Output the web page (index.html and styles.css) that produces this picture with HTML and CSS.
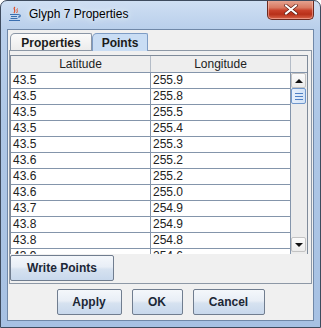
FILE: index.html
```html
<!DOCTYPE html>
<html>
<head>
<meta charset="utf-8">
<link rel="stylesheet" href="styles.css">
</head>
<body>
<div class="window">
  <div class="titlebar">
    <svg class="app-icon" width="14" height="16" viewBox="0 0 14 16">
      <path d="M7 1 C4 3 9 4 6 7" fill="none" stroke="#e0502a" stroke-width="1.3"/>
      <path d="M9.5 2.5 C8 4 10.5 5 8.5 7" fill="none" stroke="#e0502a" stroke-width="1"/>
      <path d="M2 8.5 H10 M10 8.5 C13 8.5 13 11 10 11" fill="none" stroke="#3a6fb0" stroke-width="1.2"/>
      <path d="M3 10.5 H9 M2.5 12.5 H9.5 M1 14.5 H12" fill="none" stroke="#3a6fb0" stroke-width="1.2"/>
    </svg>
    <span class="title">Glyph 7 Properties</span>
    <div class="close">
      <svg width="14" height="11" viewBox="0 0 14 11">
        <path d="M2 1.5 L12 9.5 M12 1.5 L2 9.5" stroke="#5a1a12" stroke-width="3.4" stroke-linecap="square"/>
        <path d="M2 1.5 L12 9.5 M12 1.5 L2 9.5" stroke="#fff" stroke-width="2" stroke-linecap="square"/>
      </svg>
    </div>
  </div>
  <div class="client">
    <div class="tabs">
      <div class="tab">Properties</div>
      <div class="tab selected">Points</div>
    </div>
    <div class="tabpanel">
      <div class="scrollpane">
        <div class="thead">
          <div class="th">Latitude</div>
          <div class="th">Longitude</div>
          <div class="th corner"></div>
        </div>
        <div class="body">
          <div class="rows">
            <div class="tr"><div class="td">43.5</div><div class="td">255.9</div></div>
            <div class="tr"><div class="td">43.5</div><div class="td">255.8</div></div>
            <div class="tr"><div class="td">43.5</div><div class="td">255.5</div></div>
            <div class="tr"><div class="td">43.5</div><div class="td">255.4</div></div>
            <div class="tr"><div class="td">43.5</div><div class="td">255.3</div></div>
            <div class="tr"><div class="td">43.6</div><div class="td">255.2</div></div>
            <div class="tr"><div class="td">43.6</div><div class="td">255.2</div></div>
            <div class="tr"><div class="td">43.6</div><div class="td">255.0</div></div>
            <div class="tr"><div class="td">43.7</div><div class="td">254.9</div></div>
            <div class="tr"><div class="td">43.8</div><div class="td">254.9</div></div>
            <div class="tr"><div class="td">43.8</div><div class="td">254.8</div></div>
            <div class="tr"><div class="td">43.9</div><div class="td">254.6</div></div>
          </div>
          <div class="vscroll">
            <div class="sbtn"><span class="arrow up"></span></div>
            <div class="thumb"><span></span><span></span><span></span></div>
            <div class="track"></div>
            <div class="sbtn"><span class="arrow down"></span></div>
            <div class="tail"></div>
          </div>
        </div>
      </div>
      <div class="panel-actions">
        <button class="btn write">Write Points</button>
      </div>
    </div>
    <div class="footer">
      <button class="btn apply">Apply</button>
      <button class="btn ok">OK</button>
      <button class="btn cancel">Cancel</button>
    </div>
  </div>
</div>
</body>
</html>
```
FILE: styles.css
```css
* { box-sizing: border-box; }
html, body { margin: 0; padding: 0; }
body {
  background: #ffffff;
  font-family: "Liberation Sans", Arial, sans-serif;
  font-size: 12px;
  width: 321px;
  height: 328px;
  overflow: hidden;
}
.window {
  width: 321px;
  height: 328px;
  border: 1px solid #3e4b5e;
  border-radius: 7px 7px 0 0;
  background: linear-gradient(180deg, #cfdff3 0px, #b9cfeb 28px, #aec7e6 120px, #a7c1e3 100%);
  display: flex;
  flex-direction: column;
  overflow: hidden;
}
.titlebar {
  height: 28px;
  flex: none;
  display: flex;
  align-items: center;
  padding-left: 7px;
}
.app-icon { flex: none; margin-right: 7px; margin-top: -2px; }
.title {
  color: #000;
  font-family: "Liberation Sans", Arial, sans-serif;
  font-size: 12px;
  margin-top: -2px;
  text-shadow: 0 0 4px #e8f1fb, 0 0 8px #e8f1fb;
}
.close {
  margin-left: auto;
  margin-right: 6px;
  align-self: flex-start;
  margin-top: -1px;
  width: 47px;
  height: 20px;
  border: 1px solid #6b2a20;
  border-top: none;
  border-radius: 0 0 5px 5px;
  background: linear-gradient(180deg, #e7a896 0%, #d97a62 40%, #c8412a 55%, #b83019 75%, #d8654a 100%);
  box-shadow: inset 0 0 0 1px rgba(255, 200, 190, 0.5);
  display: flex;
  align-items: center;
  justify-content: center;
}
.client {
  flex: 1;
  margin: 0 6px 6px 6px;
  border: 1px solid #7088a8;
  background: #f0f0f0;
  display: flex;
  flex-direction: column;
}
.tabs {
  display: flex;
  height: 17px;
  margin-top: 3px;
  padding-left: 2px;
  flex: none;
  position: relative;
  z-index: 1;
}
.tab {
  height: 17px;
  width: 82px;
  border: 1px solid #8a96a6;
  border-bottom: none;
  border-radius: 5px 2px 0 0;
  background: linear-gradient(180deg, #fbfbfb, #ececec);
  font-weight: bold;
  color: #1b1b1b;
  display: flex;
  align-items: center;
  justify-content: center;
  padding-top: 1px;
}
.tab.selected {
  width: 56px;
  height: 18px;
  background: #c9ddf4;
  border-color: #7e9cc4;
  margin-bottom: -1px;
  padding-top: 0;
}
.tabpanel {
  flex: 1;
  margin: 0 1px;
  border: 1px solid #8d98a6;
  background: #f0f0f0;
  padding: 4px 0 0 0;
  display: flex;
  flex-direction: column;
}
.scrollpane {
  width: 298px;
  height: 199px;
  border: 1px solid #7f8b9a;
  border-bottom: none;
  background: #ffffff;
  display: flex;
  flex-direction: column;
}
.thead {
  display: flex;
  height: 17px;
  border-bottom: 1px solid #8495ab;
  background: #eeeeee;
  flex: none;
}
.th {
  width: 140px;
  border-right: 1px solid #b4bcc7;
  text-align: center;
  color: #222;
  line-height: 16px;
}
.th.corner { width: 16px; border-right: none; }
.body {
  display: flex;
  flex: 1;
  overflow: hidden;
}
.rows {
  width: 280px;
  overflow: hidden;
}
.tr {
  display: flex;
  height: 16px;
  border-bottom: 1px solid #8495ab;
}
.td {
  width: 140px;
  border-right: 1px solid #8495ab;
  padding-left: 2px;
  line-height: 15px;
  color: #222;
}
.vscroll {
  width: 16px;
  background: #ececec;
  display: flex;
  flex-direction: column;
  padding: 0 1px 0 0;
}
.sbtn {
  height: 15px;
  flex: none;
  border: 1px solid #c3c3c3;
  border-radius: 2px;
  background: linear-gradient(180deg, #fbfbfb, #ececec);
  display: flex;
  align-items: center;
  justify-content: center;
}
.arrow {
  width: 0;
  height: 0;
  border-left: 4px solid transparent;
  border-right: 4px solid transparent;
}
.arrow.up { border-bottom: 4px solid #111; }
.arrow.down { border-top: 4px solid #111; }
.thumb {
  height: 16px;
  flex: none;
  border: 1px solid #6f97cc;
  border-radius: 2px;
  background: linear-gradient(90deg, #e6effb, #d3e3f7);
  display: flex;
  flex-direction: column;
  align-items: center;
  justify-content: center;
  gap: 2px;
}
.thumb span {
  display: block;
  width: 8px;
  height: 1px;
  background: #4f80c4;
}
.track { flex: 1; }
.tail { height: 2px; flex: none; }
.panel-actions {
  margin-top: 1px;
  display: flex;
}
.btn {
  height: 26px;
  border: 1px solid #707d8f;
  border-radius: 2px;
  background: linear-gradient(180deg, #f4f7fb 0%, #e8eef6 45%, #d6e2f0 55%, #c8d8ec 100%);
  font-family: "Liberation Sans", Arial, sans-serif;
  font-size: 12px;
  font-weight: bold;
  color: #1c2736;
  padding: 0;
  margin: 0;
}
.btn.write { width: 104px; }
.footer {
  height: 36px;
  flex: none;
  display: flex;
  justify-content: center;
  gap: 10px;
  padding-top: 5px;
}
.btn.apply { width: 65px; }
.btn.ok { width: 51px; }
.btn.cancel { width: 72px; }
```
